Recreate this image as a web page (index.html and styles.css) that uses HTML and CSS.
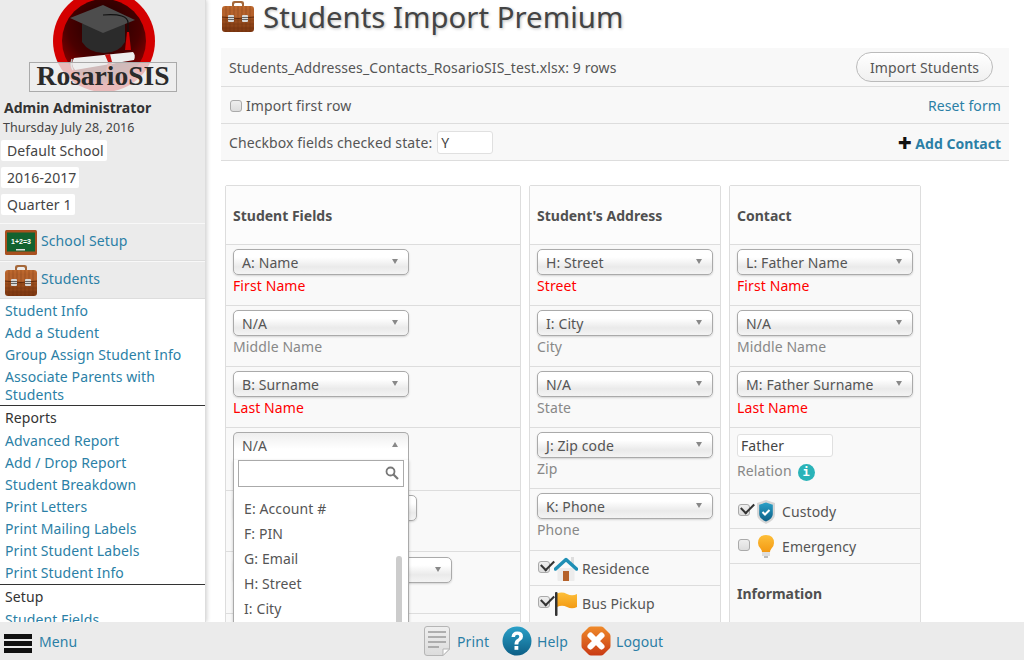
FILE: index.html
```html
<!DOCTYPE html>
<html lang="en">
<head>
<meta charset="utf-8">
<title>Students Import Premium</title>
<link rel="stylesheet" href="styles.css">
</head>
<body>
<svg class="defs" width="0" height="0" aria-hidden="true">
  <defs>
    <linearGradient id="case" x1="0" y1="0" x2="0" y2="1"><stop offset="0" stop-color="#c06a30"/><stop offset="1" stop-color="#7c3610"/></linearGradient>
    <linearGradient id="blue" x1="0" y1="0" x2="0" y2="1"><stop offset="0" stop-color="#2aa0c8"/><stop offset="1" stop-color="#0d5f86"/></linearGradient>
    <linearGradient id="orange" x1="0" y1="0" x2="0" y2="1"><stop offset="0" stop-color="#fdbf3a"/><stop offset="1" stop-color="#f39a13"/></linearGradient>
    <linearGradient id="red" x1="0" y1="0" x2="0" y2="1"><stop offset="0" stop-color="#ef8a2a"/><stop offset="1" stop-color="#c93a14"/></linearGradient>
    <linearGradient id="paper" x1="0" y1="0" x2="0" y2="1"><stop offset="0" stop-color="#efefef"/><stop offset="1" stop-color="#dcdcdc"/></linearGradient>
    <radialGradient id="disc" cx=".5" cy=".3" r=".8"><stop offset="0" stop-color="#1a0000"/><stop offset=".55" stop-color="#4a0000"/><stop offset="1" stop-color="#b00000"/></radialGradient>
    <symbol id="i-case" viewBox="0 0 32 32">
      <path d="M10 7V3Q10 1 12.500 1h7Q22 1 22 3V7h-2V4.500Q20 3 18.500 3h-5Q12 3 12 4.500V7z" fill="#a5683a"/>
      <rect x="0" y="6" width="32" height="26" rx="3" fill="url(#case)"/>
      <path d="M0 9q16 3 32 0v8q-16 3-32 0z" fill="#b5622c"/>
      <path d="M0 20h32M0 24h32M0 28h32M4 6v26M8 6v26M12 6v26M16 6v26M20 6v26M24 6v26M28 6v26" stroke="#5f280a" stroke-width=".5" opacity=".55"/>
      <path d="M0 17q16 3 32 0" fill="none" stroke="#5f280a"/>
      <rect x="6" y="15" width="6" height="7" rx="1" fill="#d8d8d8"/><rect x="20" y="15" width="6" height="7" rx="1" fill="#d8d8d8"/>
      <path d="M6 17.500h6M6 19.500h6M20 17.500h6M20 19.500h6" stroke="#444" stroke-width=".8"/>
    </symbol>
    <symbol id="i-board" viewBox="0 0 32 25">
      <rect width="32" height="25" rx="1.500" fill="#a8501f"/>
      <rect x="2" y="2.500" width="28" height="19" fill="#12622f"/>
      <text class="chalk" x="16" y="14" text-anchor="middle">1+2=3</text>
      <rect x="11" y="19" width="9" height="1.500" fill="#ddd"/>
    </symbol>
    <symbol id="i-doc" viewBox="0 0 26 30">
      <path d="M3 .5h20q2.500 0 2.500 2.500V23l-6.500 6.500H3Q.5 29.500.5 27V3Q.5.5 3 .5z" fill="url(#paper)" stroke="#b5b5b5"/>
      <path d="M19 29.500V23h6.500z" fill="#fff" stroke="#b5b5b5"/>
      <path d="M4 6h18M4 11h18M4 16h18M4 21h11" stroke="#9a9a9a" stroke-width="1.500"/>
    </symbol>
    <symbol id="i-help" viewBox="0 0 30 30">
      <circle cx="15" cy="15" r="14.500" fill="url(#blue)"/>
      <path d="M9.500 11q.5-5.500 5.800-5.500 5.700 0 5.700 5 0 3-3 4.600-1.700 1-1.700 3.400h-3.800q0-3.800 2.600-5.200 2.200-1.300 2.200-2.800 0-1.800-2-1.800-2.100 0-2.400 2.400z" fill="#fff"/>
      <rect x="12.500" y="20" width="3.800" height="3.800" fill="#fff"/>
    </symbol>
    <symbol id="i-stop" viewBox="0 0 30 30">
      <path d="M10 .5h10q1.500 0 2.500 1l6 6q1 1 1 2.500v10q0 1.500-1 2.500l-6 6q-1 1-2.500 1H10q-1.500 0-2.500-1l-6-6q-1-1-1-2.500V10q0-1.500 1-2.500l6-6q1-1 2.500-1z" fill="url(#red)"/>
      <path d="M9.500 9.500l11 11M20.500 9.500l-11 11" stroke="#fff" stroke-width="6" stroke-linecap="round"/>
    </symbol>
    <symbol id="i-house" viewBox="0 0 24 24">
      <rect x="17" y="0" width="3" height="8" fill="#ddd"/>
      <path d="M3.500 11h17v12q0 1-1 1h-15q-1 0-1-1z" fill="#ececec"/>
      <rect x="9" y="14" width="6" height="10" fill="#b5622c"/>
      <path d="M1.500 12L12 2.500 22.500 12" fill="none" stroke="#1f8fb5" stroke-width="3.500" stroke-linecap="round" stroke-linejoin="round"/>
    </symbol>
    <symbol id="i-flag" viewBox="0 0 24 24">
      <path d="M3 1.500q5-2 10 .5t10 0v13q-5 2.500-10 0t-10 0z" fill="url(#orange)"/>
      <rect x="1" y="0" width="2.500" height="24" rx="1" fill="#333"/>
    </symbol>
    <symbol id="i-shield" viewBox="0 0 18 24">
      <path d="M9 0l9 3v11q0 6-9 10Q0 20 0 14V3z" fill="#d6d6d6"/>
      <path d="M9 2.500l6.800 2.200V14q0 4.500-6.800 7.500Q2.200 18.500 2.200 14V4.700z" fill="url(#blue)"/>
      <path d="M5.500 12l2.500 2.500 4.500-4.500" fill="none" stroke="#fff" stroke-width="2"/>
    </symbol>
    <symbol id="i-bulb" viewBox="0 0 18 24">
      <path d="M9 0q8 0 8 8 0 3-2.500 5.500Q13 15 13 17H5q0-2-1.500-3.500Q1 11 1 8q0-8 8-8z" fill="url(#orange)"/>
      <rect x="5" y="17" width="8" height="4" fill="#ddd"/>
      <rect x="7" y="21" width="4" height="2" fill="#bbb"/>
    </symbol>
  </defs>
</svg>

<div class="app">
  <div class="body-row">
    <aside class="sidebar">
      <div class="side-head">
        <svg class="logo" viewBox="27 -11 150 103" width="150" height="103" aria-label="RosarioSIS logo">
          <circle cx="104" cy="41" r="51" fill="#d40000"/>
          <circle cx="104" cy="41" r="42" fill="url(#disc)"/>
          <path d="M82 24h43v18q-6 11-21 11t-22-11z" fill="#2b2b2b"/>
          <path d="M70 18L103 5l32 15-32 13z" fill="#4d4d4d"/>
          <path d="M103 15q25-2 25 8v14" fill="none" stroke="#111" stroke-width="1.200"/>
          <path d="M127 32h2l2 18h-6z" fill="#c00"/>
          <path d="M74 58l59-6q3 3 1 8l-59 10q-5-6-1-12z" fill="#eee"/>
          <path d="M72 59q-2 6 1 11" fill="none" stroke="#bbb" stroke-width="1.500"/>
          <path d="M105 55l5-1 2 8-1 9h-5l2-9z" fill="#c81212"/>
          <rect x="29.500" y="62.500" width="147" height="29" fill="#eee" fill-opacity=".78" stroke="#aaa"/>
          <text class="logo-text" x="103" y="85" text-anchor="middle">RosarioSIS</text>
        </svg>
        <div class="user-name">Admin Administrator</div>
        <div class="user-date">Thursday July 28, 2016</div>
        <div class="side-pick school">Default School</div>
        <div class="side-pick year">2016-2017</div>
        <div class="side-pick quarter">Quarter 1</div>
      </div>
      <a class="mod mod-first"><svg class="mod-ic"><use href="#i-board"/></svg><span>School Setup</span></a>
      <a class="mod"><svg class="mod-ic tall"><use href="#i-case"/></svg><span>Students</span></a>
      <nav class="side-menu">
        <a>Student Info</a>
        <a>Add a Student</a>
        <a>Group Assign Student Info</a>
        <a class="two">Associate Parents with Students</a>
        <h4>Reports</h4>
        <a>Advanced Report</a>
        <a>Add / Drop Report</a>
        <a>Student Breakdown</a>
        <a>Print Letters</a>
        <a>Print Mailing Labels</a>
        <a>Print Student Labels</a>
        <a>Print Student Info</a>
        <h4>Setup</h4>
        <a>Student Fields</a>
      </nav>
    </aside>

    <main class="main">
      <h2 class="page-title"><svg class="title-ic"><use href="#i-case"/></svg>Students Import Premium</h2>
      <div class="panel">
        <div class="panel-row">
          <span>Students_Addresses_Contacts_RosarioSIS_test.xlsx: 9 rows</span>
          <button class="btn" type="button">Import Students</button>
        </div>
        <div class="panel-row">
          <label class="check"><span class="box"></span>Import first row</label>
          <a class="link">Reset form</a>
        </div>
        <div class="panel-row">
          <span class="state">Checkbox fields checked state:<span class="text-input small">Y</span></span>
          <a class="link add"><b class="plus">+</b> Add Contact</a>
        </div>
      </div>

      <div class="columns">
        <section class="col col-a">
          <h3>Student Fields</h3>
          <div class="cell"><div class="sel w176">A: Name</div><div class="lab req">First Name</div></div>
          <div class="cell"><div class="sel w176">N/A</div><div class="lab">Middle Name</div></div>
          <div class="cell"><div class="sel w176">B: Surname</div><div class="lab req">Last Name</div></div>
          <div class="cell open-cell"><div class="sel w176 open">N/A</div></div>
          <div class="cell"><div class="sel w184"></div></div>
          <div class="cell c-62"><div class="sel w219"></div></div>
          <div class="cell"></div>
          <div class="dropdown">
            <div class="search"><svg class="lens" viewBox="0 0 14 14" width="14" height="14"><circle cx="5.500" cy="5.500" r="4" fill="none" stroke="#777" stroke-width="1.800"/><path d="M8.500 8.500l4.500 4.500" stroke="#777" stroke-width="2.200"/></svg></div>
            <ul>
              <li>E: Account #</li>
              <li>F: PIN</li>
              <li>G: Email</li>
              <li>H: Street</li>
              <li>I: City</li>
            </ul>
            <div class="thumb"></div>
          </div>
        </section>

        <section class="col col-b">
          <h3>Student's Address</h3>
          <div class="cell"><div class="sel">H: Street</div><div class="lab req">Street</div></div>
          <div class="cell"><div class="sel">I: City</div><div class="lab">City</div></div>
          <div class="cell"><div class="sel">N/A</div><div class="lab">State</div></div>
          <div class="cell"><div class="sel">J: Zip code</div><div class="lab">Zip</div></div>
          <div class="cell c-63"><div class="sel">K: Phone</div><div class="lab">Phone</div></div>
          <div class="cell cb"><span class="box on"></span><svg class="cb-ic wide"><use href="#i-house"/></svg>Residence</div>
          <div class="cell cb"><span class="box on"></span><svg class="cb-ic wide"><use href="#i-flag"/></svg>Bus Pickup</div>
        </section>

        <section class="col col-c">
          <h3>Contact</h3>
          <div class="cell"><div class="sel">L: Father Name</div><div class="lab req">First Name</div></div>
          <div class="cell"><div class="sel">N/A</div><div class="lab">Middle Name</div></div>
          <div class="cell"><div class="sel">M: Father Surname</div><div class="lab req">Last Name</div></div>
          <div class="cell c-66"><span class="text-input rel">Father</span><div class="lab rel-lab">Relation <span class="info">i</span></div></div>
          <div class="cell cb"><span class="box on"></span><svg class="cb-ic"><use href="#i-shield"/></svg>Custody</div>
          <div class="cell cb"><span class="box"></span><svg class="cb-ic"><use href="#i-bulb"/></svg>Emergency</div>
          <h3 class="sub">Information</h3>
        </section>
      </div>
    </main>
  </div>

  <footer class="footer">
    <a class="f-menu"><span class="burger"><i></i><i></i><i></i></span><span class="f-text">Menu</span></a>
    <a class="f-item f-print"><svg class="f-ic"><use href="#i-doc"/></svg><span class="f-text">Print</span></a>
    <a class="f-item"><svg class="f-ic"><use href="#i-help"/></svg><span class="f-text">Help</span></a>
    <a class="f-item"><svg class="f-ic"><use href="#i-stop"/></svg><span class="f-text">Logout</span></a>
  </footer>
</div>
</body>
</html>
```
FILE: styles.css
```css
* { box-sizing: border-box; }
html, body { margin: 0; height: 100%; overflow: hidden; }
body { font: 14px/18px "Noto Sans", "Open Sans", sans-serif; letter-spacing: .1px; color: #555; background: #fff; }
a { color: #2b7fa6; text-decoration: none; }
b, h3, .user-name, .link.add { letter-spacing: 0; }
.defs { position: absolute; }
.chalk { font: bold 7px "Liberation Sans", sans-serif; fill: #fff; letter-spacing: 0; }

.app { height: 660px; display: flex; flex-direction: column; overflow: hidden; }
.body-row { flex: 1; min-height: 0; display: flex; overflow: hidden; }

.sidebar { flex: 0 0 206px; width: 206px; border-right: 1px solid #ddd; box-shadow: 1px 0 4px rgba(0,0,0,.18); overflow: hidden; position: relative; z-index: 1; }
.side-head { background: #ebebeb; height: 223px; overflow: hidden; }
.logo { display: block; margin: -11px 0 0 27px; overflow: visible; }
.logo-text { font: bold 27.500px "Liberation Serif", serif; fill: #2a2a2a; letter-spacing: 0; }
.user-name { font-weight: 700; color: #333; margin-left: 4px; line-height: 20px; padding-top: 6px; height: 26px; }
.user-date { font-size: 12.500px; letter-spacing: 0; color: #444; margin-left: 3px; line-height: 19px; }
.side-pick { background: #fff; border-radius: 2px; margin: 6px 0 0 1px; height: 21px; line-height: 21px; padding: 0 3px 0 6px; width: max-content; color: #444; }
.side-pick.school { margin-top: 3px; }

.mod { display: flex; align-items: center; height: 38px; background: #ebebeb; border-top: 1px solid #f8f8f8; border-bottom: 1px solid #ddd; padding-left: 5px; gap: 4px; }
.mod span { margin-top: -2px; }
.mod-ic { width: 32px; height: 25px; }
.mod-ic.tall { height: 32px; }

.side-menu { padding-top: 1px; }
.side-menu a { display: block; padding: 0 5px; line-height: 22px; }
.side-menu a.two { line-height: 18px; padding-top: 2px; padding-bottom: 1px; }
.side-menu h4 { margin: 0; font-weight: 400; color: #333; line-height: 23px; height: 25px; padding: 0 5px; border-top: 1px solid #333; }

.main { flex: 1; min-width: 0; padding: 0 15px; overflow: hidden; }
.page-title { margin: 0; height: 48px; font-size: 29.400px; letter-spacing: 0; font-weight: 400; line-height: 34px; color: #444; text-shadow: 1px 1px 3px rgba(0,0,0,.25); display: flex; align-items: flex-start; }
.title-ic { width: 32px; height: 32px; margin: 0 9px 0 1px; }

.panel { background: #f8f8f8; }
.panel-row { display: flex; justify-content: space-between; align-items: center; height: 37px; padding: 2px 8px 0; border-bottom: 1px solid #ddd; }
.panel-row:first-child { height: 39px; }
.btn { font: inherit; letter-spacing: inherit; color: #555; height: 30px; width: 137px; margin: -2px 8px 0 0; border: 1px solid #bbb; border-radius: 15px; background: linear-gradient(#fff, #f0f0f0); padding: 2px 0 0; }
.check { display: flex; align-items: center; padding-left: 1px; }
.box { display: inline-block; width: 12px; height: 12px; margin-right: 4px; border: 1px solid #aaa; border-radius: 3px; background: linear-gradient(#eee, #ddd); position: relative; flex: none; }
.box.on::after { content: ""; position: absolute; left: 2px; top: -2px; width: 11px; height: 6px; border-left: 2.500px solid #333; border-bottom: 2.500px solid #333; transform: rotate(-45deg); }
.link.add { font-weight: 700; }
.plus { color: #111; font-size: 24px; line-height: 18px; vertical-align: -3px; }
.state { display: flex; align-items: center; gap: 5px; }
.text-input { display: inline-block; background: #fff; border: 1px solid #e0e0e0; border-radius: 3px; height: 23px; line-height: 21px; padding: 0 3px; color: #444; }
.text-input.small { width: 56px; margin-top: -2px; }
.text-input.rel { width: 96px; display: block; }

.columns { display: flex; gap: 8px; margin: 24px 0 0 4px; align-items: flex-start; }
.col { border: 1px solid #ddd; border-radius: 2px; background: #f9f9f9; position: relative; }
.col-a { width: 296px; height: 500px; }
.col-b, .col-c { width: 192px; height: 500px; }
.col h3 { margin: 0; height: 58px; line-height: 59px; padding-left: 7px; font-size: 14px; font-weight: 700; color: #505050; background: #fcfcfc; }
.cell { border-top: 1px solid #ddd; height: 61px; padding: 4px 7px 0; }
.open-cell { height: 63px; }
.c-62 { height: 62px; padding-top: 5px; }
.c-63 { height: 62px; }
.c-66 { height: 66px; padding-top: 6px; }
.sel { height: 26px; line-height: 25px; padding-left: 8px; border: 1px solid #aaa; border-radius: 5px; background: linear-gradient(#fff 0, #fff 30%, #eaeaea 70%, #f4f4f4 100%); box-shadow: 0 1px 2px rgba(0,0,0,.15); position: relative; color: #555; }
.sel::after { content: ""; position: absolute; right: 10px; top: 9px; border: 3.500px solid transparent; border-top: 5px solid #888; border-bottom: 0; }
.sel.open { background: linear-gradient(#eee, #fff 60%); box-shadow: none; border-bottom: 0; border-radius: 5px 5px 0 0; height: 28px; }
.sel.open::after { border-top: 0; border-bottom: 5px solid #888; }
.w176 { width: 176px; }
.w184 { width: 184px; }
.w219 { width: 219px; }
.lab { color: #888; line-height: 20px; margin-top: 1px; }
.lab.req { color: #f00; }
.rel-lab { margin-top: 4px; display: flex; align-items: center; gap: 6px; }
.info { width: 17px; height: 17px; border-radius: 50%; background: #2ab3b8; color: #fff; font: bold 12px/17px "DejaVu Sans Mono", monospace; text-align: center; margin-top: 2px; }
.cell.cb { height: 35px; padding: 2px 7px 0 8px; display: flex; align-items: center; }
.cb .box { margin-top: -4px; }
.cb-ic { width: 18px; height: 24px; margin: 0 7px 0 3px; flex: none; }
.cb-ic.wide { width: 24px; height: 24px; margin: 0 4px 0 0; }
.col h3.sub { border-top: 1px solid #ddd; background: #f9f9f9; }

.dropdown { position: absolute; left: 7px; top: 274px; width: 176px; height: 260px; background: #fff; border: 1px solid #aaa; border-top: 0; box-shadow: 0 1px 3px rgba(0,0,0,.2); z-index: 2; padding: 0 4px; }
.search { height: 27px; border: 1px solid #aaa; position: relative; }
.lens { position: absolute; right: 4px; top: 5px; }
.dropdown ul { list-style: none; margin: 9px 0 0; padding: 0 0 0 1px; }
.dropdown li { height: 25px; line-height: 25px; padding-left: 5px; color: #555; }
.thumb { position: absolute; right: 6px; top: 96px; width: 6px; height: 100px; border-radius: 3px; background: #ccc; }

.footer { flex: 0 0 38px; background: #ebebeb; display: flex; align-items: center; position: relative; z-index: 3; }
.f-menu { flex: 0 0 424px; display: flex; align-items: center; gap: 7px; padding-left: 4px; }
.f-text { margin-top: 2px; }
.burger { width: 28px; display: flex; flex-direction: column; gap: 2px; margin-top: 4px; }
.burger i { display: block; height: 5px; background: #111; }
.f-item { display: flex; align-items: center; gap: 5px; margin-right: 13px; }
.f-ic { width: 30px; height: 30px; }
.f-print { gap: 7px; }
.f-print .f-ic { width: 26px; }
```
